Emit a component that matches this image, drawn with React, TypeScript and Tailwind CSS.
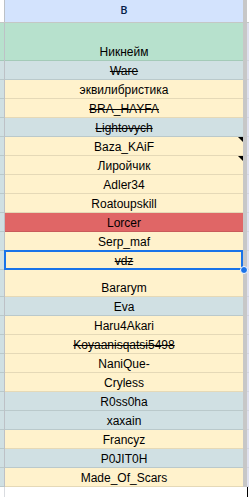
type Row = { name: string; bg: string; strike?: boolean; note?: boolean; tall?: boolean; selected?: boolean };

const Y = "bg-[#fff2cc]";
const C = "bg-[#d0e0e3]";

const rows: Row[] = [
  { name: "Ware", bg: C, strike: true },
  { name: "эквилибристика", bg: Y },
  { name: "BRA_HAYFA", bg: Y, strike: true },
  { name: "Lightovych", bg: C, strike: true },
  { name: "Baza_KAiF", bg: Y, note: true },
  { name: "Лиройчик", bg: Y, note: true },
  { name: "Adler34", bg: Y },
  { name: "Roatoupskill", bg: Y },
  { name: "Lorcer", bg: "bg-[#e06666]" },
  { name: "Serp_maf", bg: Y },
  { name: "vdz", bg: Y, strike: true, selected: true },
  { name: "Bararym", bg: Y, tall: true },
  { name: "Eva", bg: C },
  { name: "Haru4Akari", bg: Y },
  { name: "Koyaanisqatsi5498", bg: Y, strike: true },
  { name: "NaniQue-", bg: Y },
  { name: "Cryless", bg: Y },
  { name: "R0ss0ha", bg: C },
  { name: "xaxain", bg: C },
  { name: "Francyz", bg: Y },
  { name: "P0JIT0H", bg: C },
  { name: "Made_Of_Scars", bg: Y },
];

function SheetRow({ row }: { row: Row }) {
  return (
    <div className={`flex shrink-0 ${row.tall ? "h-[27px]" : "h-[19px]"} ${row.selected ? "relative z-10" : ""}`}>
      <div className="w-[4px] bg-[#d0e0e3] border-b border-black/10" />
      <div className="w-px bg-[#bdc1c6]" />
      <div className={`relative w-[238px] flex items-end justify-center pb-[1px] border-b border-black/10 ${row.bg}`}>
        <span className={`text-[12px] leading-[14px] text-black whitespace-nowrap ${row.strike ? "line-through" : ""}`}>{row.name}</span>
        {row.note && (
          <div className="absolute top-0 right-0 w-0 h-0 border-l-[5px] border-l-transparent border-t-[5px] border-t-black" />
        )}
        {row.selected && (
          <>
            <div className="absolute -left-[1px] -top-[1px] right-0 -bottom-[1px] border-2 border-[#1a73e8]" />
            <div className="absolute -right-[5px] -bottom-[5px] w-[8px] h-[8px] rounded-full bg-[#1a73e8] border border-white" />
          </>
        )}
      </div>
      <div className="w-[4px] bg-[#c7c7c7]" />
      <div className="w-[2px] bg-[#dfe1ee] border-b border-black/5" />
    </div>
  );
}

export default function App() {
  return (
    <div className="w-[249px] h-[497px] flex flex-col bg-white overflow-hidden font-['Liberation_Sans',Arial,sans-serif]">
      <div className="flex shrink-0 h-[23px] border-b border-[#c4c7c5]">
        <div className="w-[4px] bg-white" />
        <div className="w-px bg-[#bdc1c6]" />
        <div className="w-[238px] flex items-center justify-center bg-[#d3e3fd]">
          <span className="text-[11px] font-medium text-[#041e49] font-['Roboto',sans-serif]">B</span>
        </div>
        <div className="w-[4px] bg-[#c7c7c7]" />
        <div className="w-[2px] bg-white" />
      </div>
      <div className="flex shrink-0 h-[38px]">
        <div className="w-[4px] bg-[#b7e1cd] border-b border-black/10" />
        <div className="w-px bg-[#bdc1c6]" />
        <div className="w-[238px] flex items-end justify-center pb-[1px] bg-[#b7e1cd] border-b border-black/10">
          <span className="text-[12px] leading-[14px] text-black">Никнейм</span>
        </div>
        <div className="w-[4px] bg-[#c7c7c7]" />
        <div className="w-[2px] bg-[#dfe1ee] border-b border-black/5" />
      </div>
      {rows.map((r) => (
        <SheetRow key={r.name} row={r} />
      ))}
      <div className="flex flex-1">
        <div className="w-[4px] bg-white" />
        <div className="w-px bg-[#dadce0]" />
        <div className="w-[238px] bg-white" />
        <div className="w-[4px] bg-white" />
        <div className="w-px bg-black" />
        <div className="w-px bg-white" />
      </div>
    </div>
  );
}
